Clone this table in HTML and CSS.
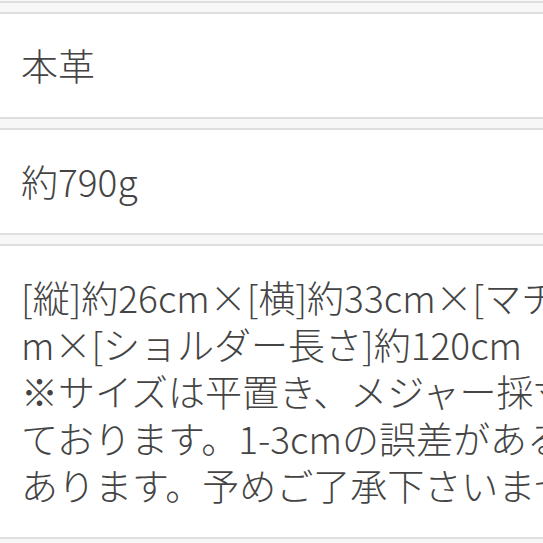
FILE: index.html
```html
<!DOCTYPE html>
<html lang="ja">
<head>
  <meta charset="UTF-8">
  <title>商品詳細</title>
  <meta name="viewport" content="width=device-width, initial-scale=1.0">
  <link rel="stylesheet" href="styles.css">
</head>
<body>
  <div class="spec-list">
    <div class="spec spec-cut"></div>

    <div class="spec">
      <p class="spec-text">本革</p>
    </div>

    <div class="spec">
      <p class="spec-text">約790g</p>
    </div>

    <div class="spec">
      <p class="spec-text">[縦]約26cm×[横]約33cm×[マチ]約12c<br>m×[ショルダー長さ]約120cm<br>※サイズは平置き、メジャー採寸し<br>ております。1-3cmの誤差がある場合が<br>あります。予めご了承下さいませ。</p>
    </div>
  </div>
</body>
</html>
```

FILE: styles.css
```css
* {
  box-sizing: border-box;
}
body {
  margin: 0;
  background: #f7f7f7;
  font-family: 'Noto Sans CJK JP', 'Noto Sans', sans-serif;
  color: #444;
  overflow: hidden;
}
.spec-list {
  display: flex;
  flex-direction: column;
  gap: 9px;
  padding-top: 1px;
  width: 543px;
}
.spec {
  background: #fff;
  border-top: 2px solid #dedede;
  border-bottom: 2px solid #dedede;
  padding: 28px 21px;
  overflow: hidden;
}
.spec-cut {
  border-top: none;
  padding: 0;
  background: none;
}
.spec-text {
  margin: 0;
  font-size: 37px;
  font-weight: 300;
  line-height: 47px;
  white-space: nowrap;
}
```
